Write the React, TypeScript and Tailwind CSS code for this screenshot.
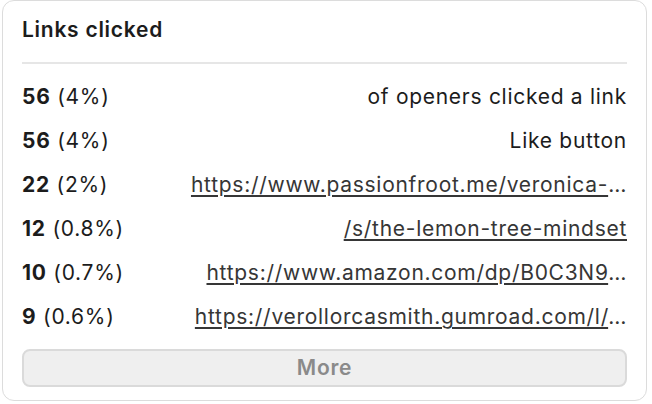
const rows = [
  { count: "56", pct: "(4%)", label: "of openers clicked a link", link: false, cut: false },
  { count: "56", pct: "(4%)", label: "Like button", link: false, cut: false },
  { count: "22", pct: "(2%)", label: "https://www.passionfroot.me/veronica-", link: true, cut: true },
  { count: "12", pct: "(0.8%)", label: "/s/the-lemon-tree-mindset", link: true, cut: false },
  { count: "10", pct: "(0.7%)", label: "https://www.amazon.com/dp/B0C3N9", link: true, cut: true },
  { count: "9", pct: "(0.6%)", label: "https://verollorcasmith.gumroad.com/l/", link: true, cut: true },
];

export default function App() {
  return (
    <div className="w-[652px] h-[404px] bg-white overflow-hidden font-['Inter',sans-serif] tracking-[0.045em]">
      <div className="ml-[2px] w-[645px] h-[401px] border border-[#dcdcdc] rounded-[12px] px-[19px] pt-[17px]">
        <h2 className="h-[24px] leading-[24px] text-[21px] font-semibold text-[#1c1c1c] tracking-[0.035em]">Links clicked</h2>
        <div className="mt-[20px] h-[2px] bg-[#e6e6e6]"></div>
        <div className="mt-[11px]">
          {rows.map((r, i) => (
            <div key={i} className="h-[44px] flex items-center justify-between text-[21px] text-[#1c1c1c]">
              <div className="shrink-0 whitespace-nowrap">
                <span className="font-bold">{r.count}</span> <span>{r.pct}</span>
              </div>
              {r.link ? (
                <span className="ml-4 whitespace-nowrap text-[#363636]">
                  <a className="underline underline-offset-[3px] decoration-[1.5px]">{r.label}</a>
                  {r.cut && "…"}
                </span>
              ) : (
                <span className="ml-4 whitespace-nowrap">{r.label}</span>
              )}
            </div>
          ))}
        </div>
        <button className="mt-[10px] w-full h-[38px] rounded-[8px] border-2 border-[#dadada] bg-[#efefef] text-[21px] font-semibold text-[#8a8a8a]">
          More
        </button>
      </div>
    </div>
  );
}
